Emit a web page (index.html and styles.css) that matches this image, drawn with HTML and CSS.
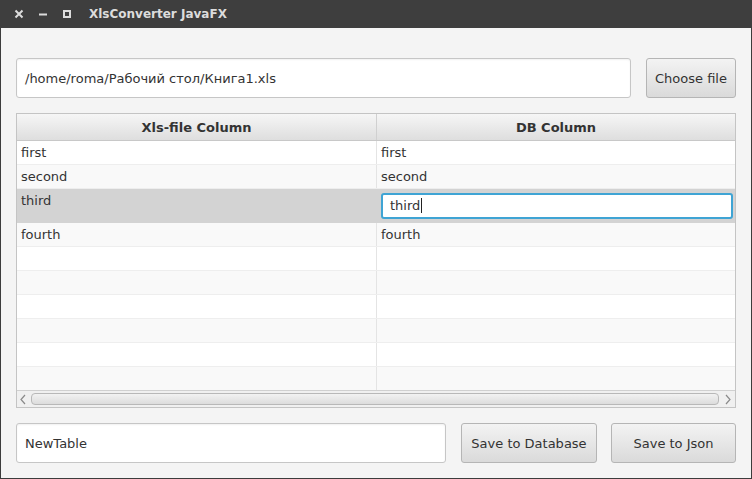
FILE: index.html
```html
<!DOCTYPE html>
<html>
<head>
<meta charset="utf-8">
<link rel="stylesheet" href="styles.css">
</head>
<body>
<div class="window">
  <div class="titlebar">
    <svg class="ctl" width="10" height="10" viewBox="0 0 10 10"><path d="M1.5 1.5L8.5 8.5M8.5 1.5L1.5 8.5" stroke="#dcdcdc" stroke-width="2"/></svg>
    <svg class="ctl" width="10" height="10" viewBox="0 0 10 10"><path d="M1 5.5H9" stroke="#dcdcdc" stroke-width="2"/></svg>
    <svg class="ctl" width="10" height="10" viewBox="0 0 10 10"><rect x="2" y="2" width="6" height="6" fill="none" stroke="#dcdcdc" stroke-width="2"/></svg>
    <span class="title">XlsConverter JavaFX</span>
  </div>
  <div class="content">
    <div class="toprow">
      <div class="field grow">/home/roma/Рабочий стол/Книга1.xls</div>
      <div class="btn choose">Choose file</div>
    </div>
    <div class="table">
      <div class="head">
        <div class="hc left">Xls-file Column</div>
        <div class="hc right">DB Column</div>
      </div>
      <div class="body">
        <div class="row"><div class="c left">first</div><div class="c right">first</div></div>
        <div class="row odd"><div class="c left">second</div><div class="c right">second</div></div>
        <div class="row sel"><div class="c left top">third</div><div class="c right edit"><div class="editbox">third<span class="caret"></span></div></div></div>
        <div class="row odd"><div class="c left">fourth</div><div class="c right">fourth</div></div>
        <div class="row"><div class="c left"></div><div class="c right"></div></div>
        <div class="row odd"><div class="c left"></div><div class="c right"></div></div>
        <div class="row"><div class="c left"></div><div class="c right"></div></div>
        <div class="row odd"><div class="c left"></div><div class="c right"></div></div>
        <div class="row"><div class="c left"></div><div class="c right"></div></div>
        <div class="row odd last"><div class="c left"></div><div class="c right"></div></div>
      </div>
      <div class="hscroll">
        <svg class="arr" width="10" height="17" viewBox="0 0 10 17"><path d="M7 4L3 8.5L7 13" fill="none" stroke="#8a8a8a" stroke-width="1.2"/></svg>
        <div class="thumb"></div>
        <svg class="arr" width="10" height="17" viewBox="0 0 10 17"><path d="M3 4L7 8.5L3 13" fill="none" stroke="#8a8a8a" stroke-width="1.2"/></svg>
      </div>
    </div>
    <div class="botrow">
      <div class="field name">NewTable</div>
      <div class="btn db">Save to Database</div>
      <div class="btn json">Save to Json</div>
    </div>
  </div>
</div>
</body>
</html>
```
FILE: styles.css
```css
* { box-sizing: border-box; }
html, body { margin: 0; padding: 0; }
body { width: 752px; height: 479px; overflow: hidden; font-family: "DejaVu Sans", sans-serif; font-size: 13px; color: #333; }
.window { width: 752px; height: 479px; background: #f4f4f4; border: 1px solid #3c3c3c; border-top: 0; display: flex; flex-direction: column; }
.titlebar { height: 28px; margin: 0 -1px; background: #3e3e3e; display: flex; align-items: center; padding-left: 14px; flex: none; }
.ctl { margin-right: 14px; flex: none; }
.title { margin-left: 3px; color: #dcdcdc; font-weight: bold; font-size: 12px; }
.content { padding: 30px 15px 15px 15px; display: flex; flex-direction: column; gap: 15px; flex: 1; }
.toprow, .botrow { display: flex; gap: 15px; height: 40px; flex: none; }
.field { background: #fff; border: 1px solid #c6c6c6; border-radius: 3px; display: flex; align-items: center; padding-left: 8px; box-shadow: inset 0 1px 2px rgba(0,0,0,0.06); }
.grow { flex: 1; }
.name { width: 430px; }
.btn { border: 1px solid #b5b5b5; border-radius: 3px; background: linear-gradient(#f3f3f3, #dadada); display: flex; align-items: center; justify-content: center; }
.choose { width: 90px; }
.db { width: 136px; }
.json { width: 125px; margin-left: -1px; }
.table { height: 295px; flex: none; border: 1px solid #c4c4c4; background: #fff; display: flex; flex-direction: column; }
.head { height: 27px; display: flex; background: linear-gradient(#f6f6f6, #dedede); border-bottom: 1px solid #c8c8c8; flex: none; }
.hc { display: flex; align-items: center; justify-content: center; font-weight: bold; }
.left { width: 360px; border-right: 1px solid #e4e4e4; }
.right { flex: 1; }
.head .left { border-right: 1px solid #d0d0d0; }
.body { flex: 1; display: flex; flex-direction: column; overflow: hidden; }
.row { height: 24px; display: flex; border-bottom: 1px solid #eeeeee; background: #fff; flex: none; }
.row.odd { background: #f9f9f9; }
.row.last { height: 25px; border-bottom: 0; }
.c { display: flex; align-items: center; padding-left: 4px; padding-bottom: 1px; }
.row.sel { height: 34px; background: #d3d3d3; border-bottom-color: #d3d3d3; }
.row.sel .left { border-right-color: #d3d3d3; }
.c.top { align-items: flex-start; padding-top: 4px; }
.c.edit { padding: 3px 2px 3px 4px; }
.editbox { flex: 1; height: 26px; background: #fff; border: 2px solid #3fa4d4; border-radius: 3px; display: flex; align-items: center; padding-left: 7px; }
.caret { display: inline-block; width: 1px; height: 15px; background: #222; margin-left: 1px; }
.hscroll { height: 17px; flex: none; border-top: 1px solid #d0d0d0; background: #f0f0f0; display: flex; align-items: center; padding: 0 2px 0 1px; }
.arr { flex: none; }
.thumb { flex: 1; height: 12px; margin: 0 4px 0 3px; border: 1px solid #b8b8b8; border-radius: 4px; background: linear-gradient(#f2f2f2, #dcdcdc); }
```
